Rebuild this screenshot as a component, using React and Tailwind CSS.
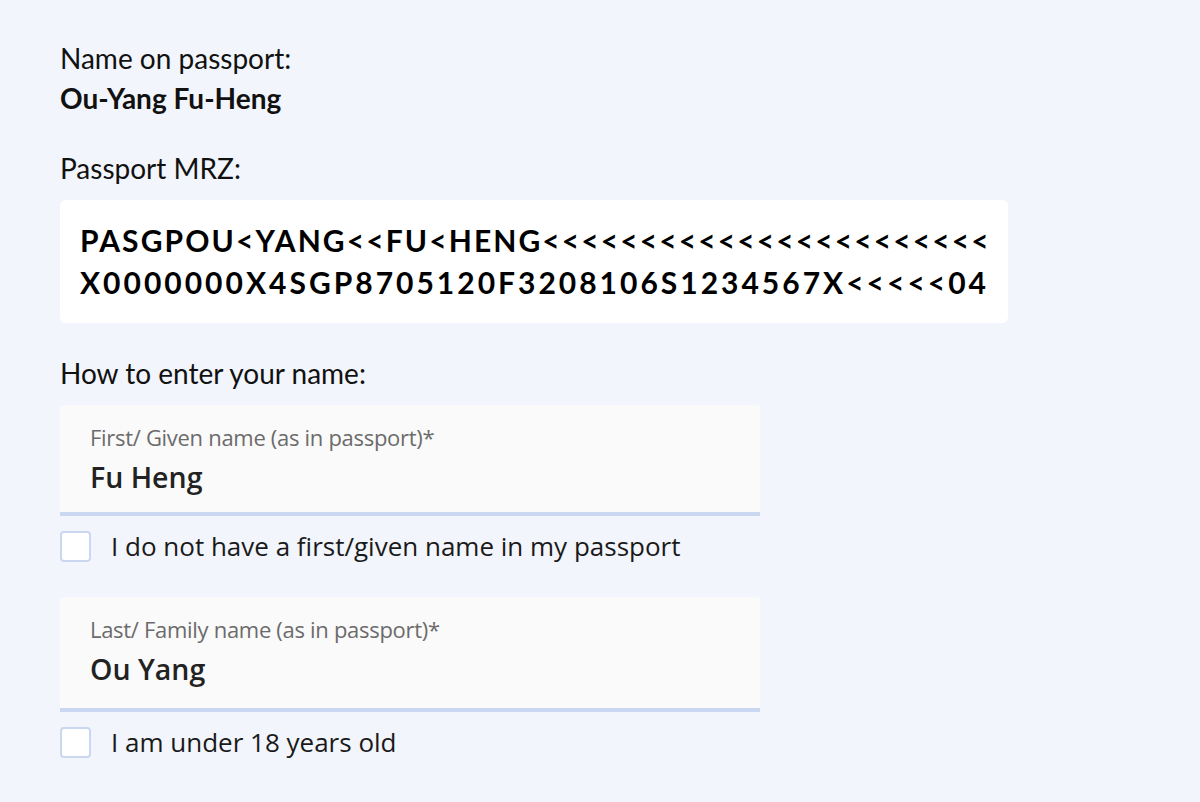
import React from "react";

const sans = { fontFamily: "Lato, 'Noto Sans', sans-serif" };
const os = { fontFamily: "'Open Sans', 'Noto Sans', sans-serif" };

function Field({ label, value, h }) {
  return (
    <div className={`w-[700px] ${h} bg-[#fafafa] rounded-t-[4px] border-b-[4px] border-[#c9d7f1] px-[30px] pt-[17px]`} style={os}>
      <div className="text-[22px] leading-[30px] text-[#6b6b6b] tracking-[-0.3px]">{label}</div>
      <div className="mt-[9px] text-[28.5px] leading-[32px] font-semibold text-[#222]">{value}</div>
    </div>
  );
}

function Check({ text }) {
  return (
    <div className="flex items-center gap-[20px]" style={os}>
      <div className="w-[31px] h-[31px] bg-white border-2 border-[#c9d7f1] rounded-[4px]" />
      <span className="text-[26px] leading-[32px] text-[#1a1a1a]">{text}</span>
    </div>
  );
}

export default function App() {
  return (
    <div className="w-[1200px] h-[802px] bg-[#f2f5fb] pl-[60px] pt-[42px] text-[#111]" style={sans}>
      <div className="text-[28px] leading-[32px]">Name on passport:</div>
      <div className="text-[28px] leading-[32px] font-bold mt-[8px]">Ou-Yang Fu-Heng</div>
      <div className="text-[28px] leading-[32px] mt-[38px]">Passport MRZ:</div>
      <div className="mt-[16px] w-[948px] h-[123px] bg-white rounded-[6px] pl-[20px] pt-[19px] font-bold text-[30px] leading-[42px] text-black whitespace-nowrap">
        <div className="tracking-[2.1px]">PASGPOU&lt;YANG&lt;&lt;FU&lt;HENG&lt;&lt;&lt;&lt;&lt;&lt;&lt;&lt;&lt;&lt;&lt;&lt;&lt;&lt;&lt;&lt;&lt;&lt;&lt;&lt;&lt;&lt;&lt;</div>
        <div className="tracking-[3px]">X0000000X4SGP8705120F3208106S1234567X&lt;&lt;&lt;&lt;&lt;04</div>
      </div>
      <div className="text-[28px] leading-[32px] mt-[34px]">How to enter your name:</div>
      <div className="mt-[16px]">
        <Field label="First/ Given name (as in passport)*" value="Fu Heng" h="h-[111px]" />
      </div>
      <div className="mt-[14px]">
        <Check text="I do not have a first/given name in my passport" />
      </div>
      <div className="mt-[35px]">
        <Field label="Last/ Family name (as in passport)*" value="Ou Yang" h="h-[115px]" />
      </div>
      <div className="mt-[14px]">
        <Check text="I am under 18 years old" />
      </div>
    </div>
  );
}
